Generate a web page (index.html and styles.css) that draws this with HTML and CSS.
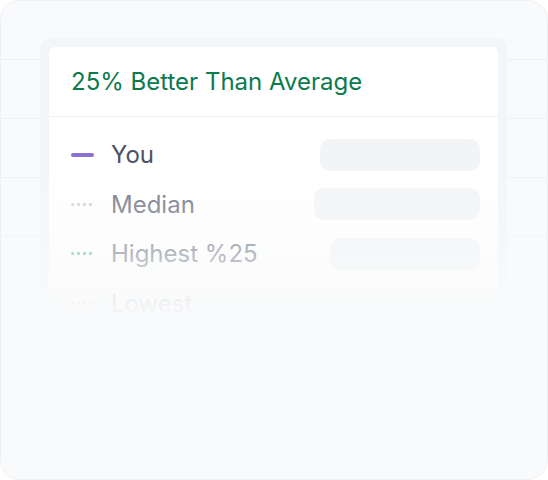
FILE: index.html
```html
<!DOCTYPE html>
<html lang="en">
<head>
    <meta charset="UTF-8">
    <meta name="viewport" content="width=device-width, initial-scale=1.0">
    <link rel="stylesheet" href="styles.css">
</head>
<body>

<!-- Benchmark preview -->
<div class="frame">
    <div class="grid-lines">
        <div class="grid-row"></div>
        <div class="grid-row"></div>
        <div class="grid-row"></div>
        <div class="grid-row"></div>
        <div class="grid-row"></div>
    </div>

    <div class="card-ring">
        <div class="card">
            <div class="card-head">25% Better Than Average</div>
            <div class="legend">
                <div class="legend-row">
                    <span class="mark mark-you"></span>
                    <span class="label label-you">You</span>
                    <span class="bar bar-you"></span>
                </div>
                <div class="legend-row">
                    <span class="mark mark-dots dots-gray"></span>
                    <span class="label">Median</span>
                    <span class="bar bar-median"></span>
                </div>
                <div class="legend-row">
                    <span class="mark mark-dots dots-green"></span>
                    <span class="label">Highest %25</span>
                    <span class="bar bar-high"></span>
                </div>
                <div class="legend-row">
                    <span class="mark mark-dots dots-red"></span>
                    <span class="label">Lowest</span>
                </div>
            </div>
        </div>
    </div>

    <div class="fade"></div>
</div>

</body>
</html>
```

FILE: styles.css
```css
body {
  margin: 0;
  padding: 0;
  background-color: #ffffff;
  font-family: Inter, "Noto Sans", Arial, sans-serif;
}
.frame {
  position: relative;
  width: 548px;
  height: 480px;
  box-sizing: border-box;
  border: 1.5px solid #eef0f3;
  border-radius: 20px;
  background-color: #f9fafb;
  overflow: hidden;
}
.grid-lines {
  display: flex;
  flex-direction: column;
}
.grid-row {
  height: 58px;
  border-bottom: 1px solid #eef0f2;
}
.card-ring {
  position: absolute;
  top: 37px;
  left: 39px;
  width: 467px;
  padding: 9px;
  box-sizing: border-box;
  border-radius: 10px;
  background-color: #f4f5f7;
}
.card {
  background-color: #ffffff;
  border-radius: 6px;
  height: 330px;
}
.card-head {
  padding: 0 22px;
  height: 69px;
  display: flex;
  align-items: center;
  font-size: 24px;
  color: #0b7a4d;
  border-bottom: 1px solid #f0f1f3;
}
.legend {
  display: flex;
  flex-direction: column;
  padding: 13px 18px 0 22px;
}
.legend-row {
  display: flex;
  align-items: center;
  height: 49.5px;
}
.mark {
  width: 23px;
  height: 4px;
  border-radius: 2px;
  margin-right: 17px;
}
.mark-you {
  background-color: #8a6fd4;
}
.mark-dots {
  height: 3px;
  background-size: 6px 3px;
  background-repeat: repeat-x;
}
.dots-gray {
  background-image: linear-gradient(to right, #cfd3d8 3px, transparent 3px);
}
.dots-green {
  background-image: linear-gradient(to right, #4fcf7f 3px, transparent 3px);
}
.dots-red {
  background-image: linear-gradient(to right, #f07f7f 3px, transparent 3px);
}
.label {
  font-size: 24px;
  color: #6b7280;
}
.label-you {
  color: #4b5263;
}
.bar {
  margin-left: auto;
  height: 32px;
  border-radius: 10px;
  background-color: #f3f4f6;
}
.bar-you {
  width: 160px;
}
.bar-median {
  width: 166px;
}
.bar-high {
  width: 150px;
}
.fade {
  position: absolute;
  inset: 0;
  background: linear-gradient(to bottom, rgba(249, 250, 251, 0) 165px, rgba(249, 250, 251, 0.5) 250px, rgba(249, 250, 251, 0.92) 298px, #f9fafb 325px);
}
```
